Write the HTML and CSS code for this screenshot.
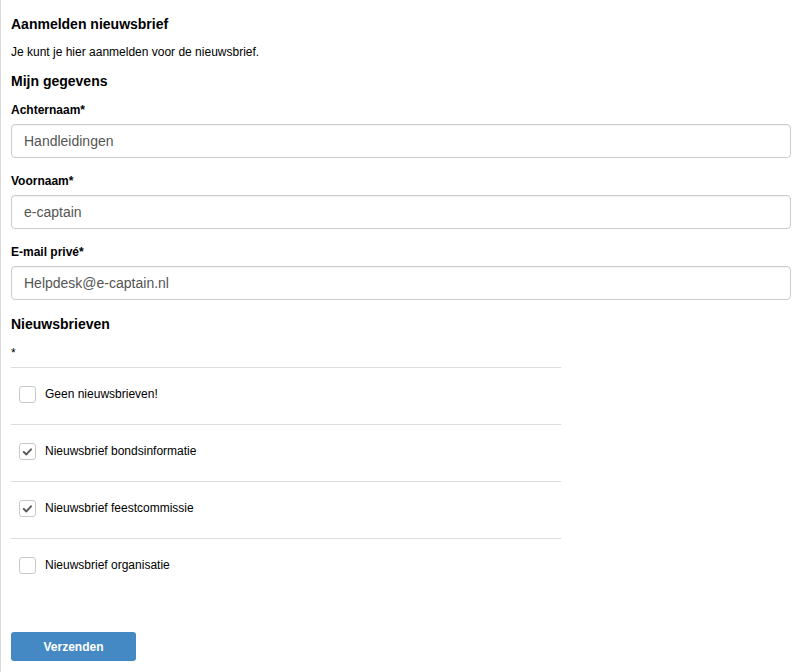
FILE: index.html
```html
<!DOCTYPE html>
<html lang="nl">
<head>
<meta charset="utf-8">
<title>Aanmelden nieuwsbrief</title>
<link rel="stylesheet" href="styles.css">
</head>
<body>
<div class="page">
  <h1 class="title">Aanmelden nieuwsbrief</h1>
  <p class="intro">Je kunt je hier aanmelden voor de nieuwsbrief.</p>
  <h2 class="section">Mijn gegevens</h2>

  <div class="field">
    <label class="label">Achternaam*</label>
    <div class="input">Handleidingen</div>
  </div>
  <div class="field">
    <label class="label">Voornaam*</label>
    <div class="input">e-captain</div>
  </div>
  <div class="field">
    <label class="label">E-mail privé*</label>
    <div class="input">Helpdesk@e-captain.nl</div>
  </div>

  <h2 class="section section-news">Nieuwsbrieven</h2>
  <div class="required">*</div>

  <div class="options">
    <div class="option">
      <span class="box"></span>
      <span class="opt-label">Geen nieuwsbrieven!</span>
    </div>
    <div class="option">
      <span class="box"><svg viewBox="0 0 17 17" width="17" height="17"><path d="M4.8 9 L7.4 11.4 L12 6.3" fill="none" stroke="#5a5a5a" stroke-width="2" stroke-linecap="round" stroke-linejoin="round"/></svg></span>
      <span class="opt-label">Nieuwsbrief bondsinformatie</span>
    </div>
    <div class="option">
      <span class="box"><svg viewBox="0 0 17 17" width="17" height="17"><path d="M4.8 9 L7.4 11.4 L12 6.3" fill="none" stroke="#5a5a5a" stroke-width="2" stroke-linecap="round" stroke-linejoin="round"/></svg></span>
      <span class="opt-label">Nieuwsbrief feestcommissie</span>
    </div>
    <div class="option">
      <span class="box"></span>
      <span class="opt-label">Nieuwsbrief organisatie</span>
    </div>
  </div>

  <button class="submit" type="button">Verzenden</button>
</div>
</body>
</html>
```
FILE: styles.css
```css
html, body {
  margin: 0;
  padding: 0;
  background: #fff;
}
body {
  font-family: "Liberation Sans", Arial, sans-serif;
  color: #000;
}
.page {
  box-sizing: border-box;
  min-height: 672px;
  border-left: 1px solid #d9d9d9;
  padding: 14px 10px 20px 10px;
}
.title {
  margin: 0;
  font-size: 14px;
  font-weight: bold;
  line-height: 20px;
}
.intro {
  margin: 10px 0 0 0;
  font-size: 12px;
  line-height: 16px;
}
.section {
  margin: 11px 0 0 0;
  font-size: 14px;
  font-weight: bold;
  line-height: 20px;
}
.field {
  margin-top: 11px;
}
.field + .field {
  margin-top: 15px;
}
.label {
  display: block;
  font-size: 12px;
  font-weight: bold;
  line-height: 16px;
}
.input {
  box-sizing: border-box;
  margin-top: 6px;
  height: 34px;
  padding: 0 12px;
  border: 1px solid #cccccc;
  border-radius: 4px;
  box-shadow: inset 0 1px 1px rgba(0,0,0,0.05);
  font-size: 14px;
  line-height: 32px;
  color: #555;
}
.section-news {
  margin-top: 14px;
}
.required {
  margin-top: 11px;
  font-size: 12px;
  line-height: 16px;
}
.options {
  margin-top: 6px;
  width: 550px;
}
.option {
  display: flex;
  align-items: center;
  gap: 9px;
  height: 57px;
  box-sizing: border-box;
  border-top: 1px solid #dddddd;
  padding: 0 0 4px 8px;
}
.box {
  box-sizing: border-box;
  width: 17px;
  height: 17px;
  border: 1px solid #c8c8c8;
  border-radius: 3px;
  background: #fff;
  display: flex;
  align-items: center;
  justify-content: center;
  flex: none;
}
.box svg {
  display: block;
  margin: -1px;
}
.opt-label {
  font-size: 12px;
  line-height: 16px;
}
.submit {
  display: block;
  margin-top: 37px;
  width: 125px;
  height: 29px;
  border: 0;
  border-radius: 3px;
  background: #4589c4;
  color: #fff;
  font-family: "Liberation Sans", Arial, sans-serif;
  font-size: 12px;
  font-weight: bold;
  padding: 0;
}
```
